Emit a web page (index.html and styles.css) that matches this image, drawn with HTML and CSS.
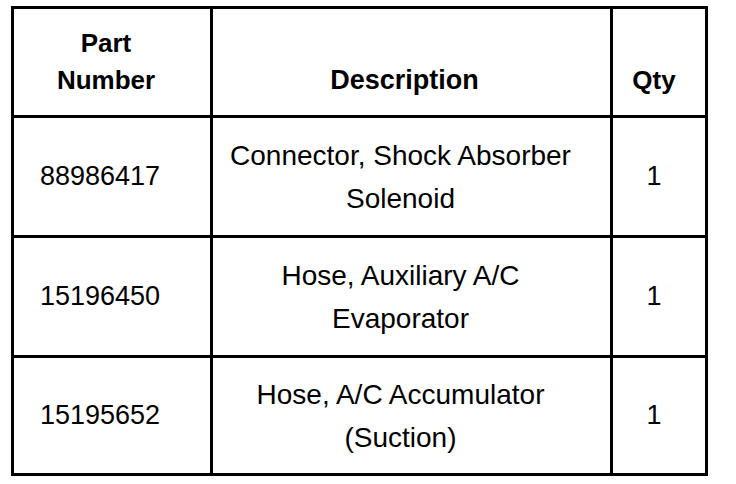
FILE: index.html
```html
<!DOCTYPE html>
<html>
<head>
<meta charset="utf-8">
<link rel="stylesheet" href="styles.css">
</head>
<body>
<div class="parts">
  <div class="cell head c1">Part<br>Number</div>
  <div class="cell head c2">Description</div>
  <div class="cell head c3">Qty</div>

  <div class="cell num">88986417</div>
  <div class="cell desc">Connector, Shock Absorber<br>Solenoid</div>
  <div class="cell qty">1</div>

  <div class="cell num">15196450</div>
  <div class="cell desc">Hose, Auxiliary A/C<br>Evaporator</div>
  <div class="cell qty">1</div>

  <div class="cell num">15195652</div>
  <div class="cell desc">Hose, A/C Accumulator<br>(Suction)</div>
  <div class="cell qty">1</div>
</div>
</body>
</html>
```
FILE: styles.css
```css
html, body {
  background: #fff;
}
body {
  margin: 0;
  padding: 6px 0 0 11px;
  font-family: "Liberation Sans", Arial, sans-serif;
  color: #000;
}
.parts {
  display: grid;
  grid-template-columns: 196px 397px 92px;
  grid-template-rows: 106px 117px 117px 115px;
  gap: 3px;
  padding: 3px;
  background: #000;
  width: max-content;
}
.cell {
  background: #fff;
  display: flex;
  flex-direction: column;
  justify-content: center;
  text-align: center;
  font-size: 27px;
  line-height: 43px;
}
.head {
  font-weight: bold;
  font-size: 26px;
  line-height: 37px;
  justify-content: flex-end;
  padding-bottom: 16px;
}
.head.c1 { padding-right: 12px; }
.head.c2 { padding-right: 14px; font-size: 27px; }
.head.c3 { padding-right: 10px; }
.num {
  text-align: left;
  padding-left: 26px;
}
.desc {
  padding-right: 22px;
  font-size: 28px;
}
.qty { padding-right: 10px; }
```
